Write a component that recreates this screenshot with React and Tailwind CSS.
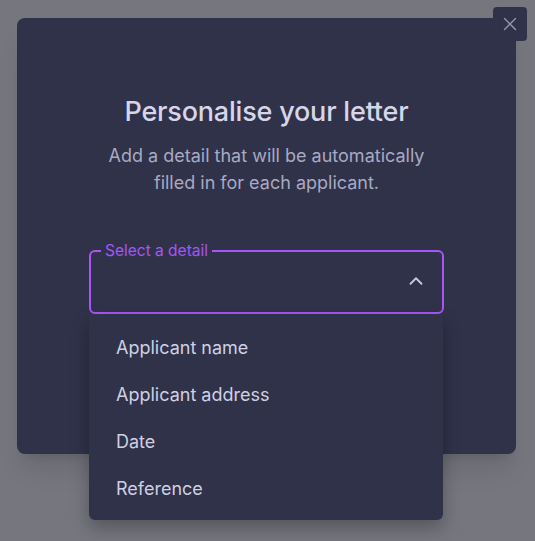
import { ChevronUp, X } from "lucide-react";

const details = ["Applicant name", "Applicant address", "Date", "Reference"];

export default function App() {
  return (
    <div
      className="relative h-[541px] w-[535px] overflow-hidden bg-[#76767f] pt-[18px] pl-[17px]"
      style={{ fontFamily: "Inter, 'Noto Sans', sans-serif" }}
    >
      <div className="flex h-[436px] w-[499px] flex-col items-center rounded-lg bg-[#2f3249] px-[72px] pt-[78px] text-center shadow-xl">
        <h2 className="text-[27px] font-medium leading-8 tracking-[-0.2px] text-[#d6d6e8]">
          Personalise your letter
        </h2>
        <p className="mt-[14px] w-[340px] text-[18px] leading-[27px] text-[#a9a9c2]">
          Add a detail that will be automatically filled in for each applicant.
        </p>

        <div className="relative mt-[47px] w-full text-left">
          <fieldset className="h-[71px] rounded-md border-2 border-[#a855f7] px-[10px]">
            <legend className="px-[4px] text-[15.5px] leading-none text-[#a855f7]">
              Select a detail
            </legend>
          </fieldset>
          <ChevronUp
            className="absolute right-[17px] top-[27px] h-[22px] w-[22px] text-[#c8c8dc]"
            strokeWidth={2}
          />

          <ul className="absolute left-0 right-[1px] top-[71px] z-10 rounded-b-md bg-[#2f3249] pt-[10px] pb-[8px] shadow-[0_8px_18px_rgba(0,0,0,0.28)]">
            {details.map((item) => (
              <li
                key={item}
                className="flex h-[47px] items-center px-[27px] text-[18px] text-[#d0d0e2]"
              >
                {item}
              </li>
            ))}
          </ul>
        </div>
      </div>

      <button className="absolute left-[493px] top-[7px] flex h-[34px] w-[34px] items-center justify-center rounded bg-[#2f3249] text-[#9596ad]">
        <X className="h-[22px] w-[22px]" strokeWidth={1.5} />
      </button>
    </div>
  );
}
